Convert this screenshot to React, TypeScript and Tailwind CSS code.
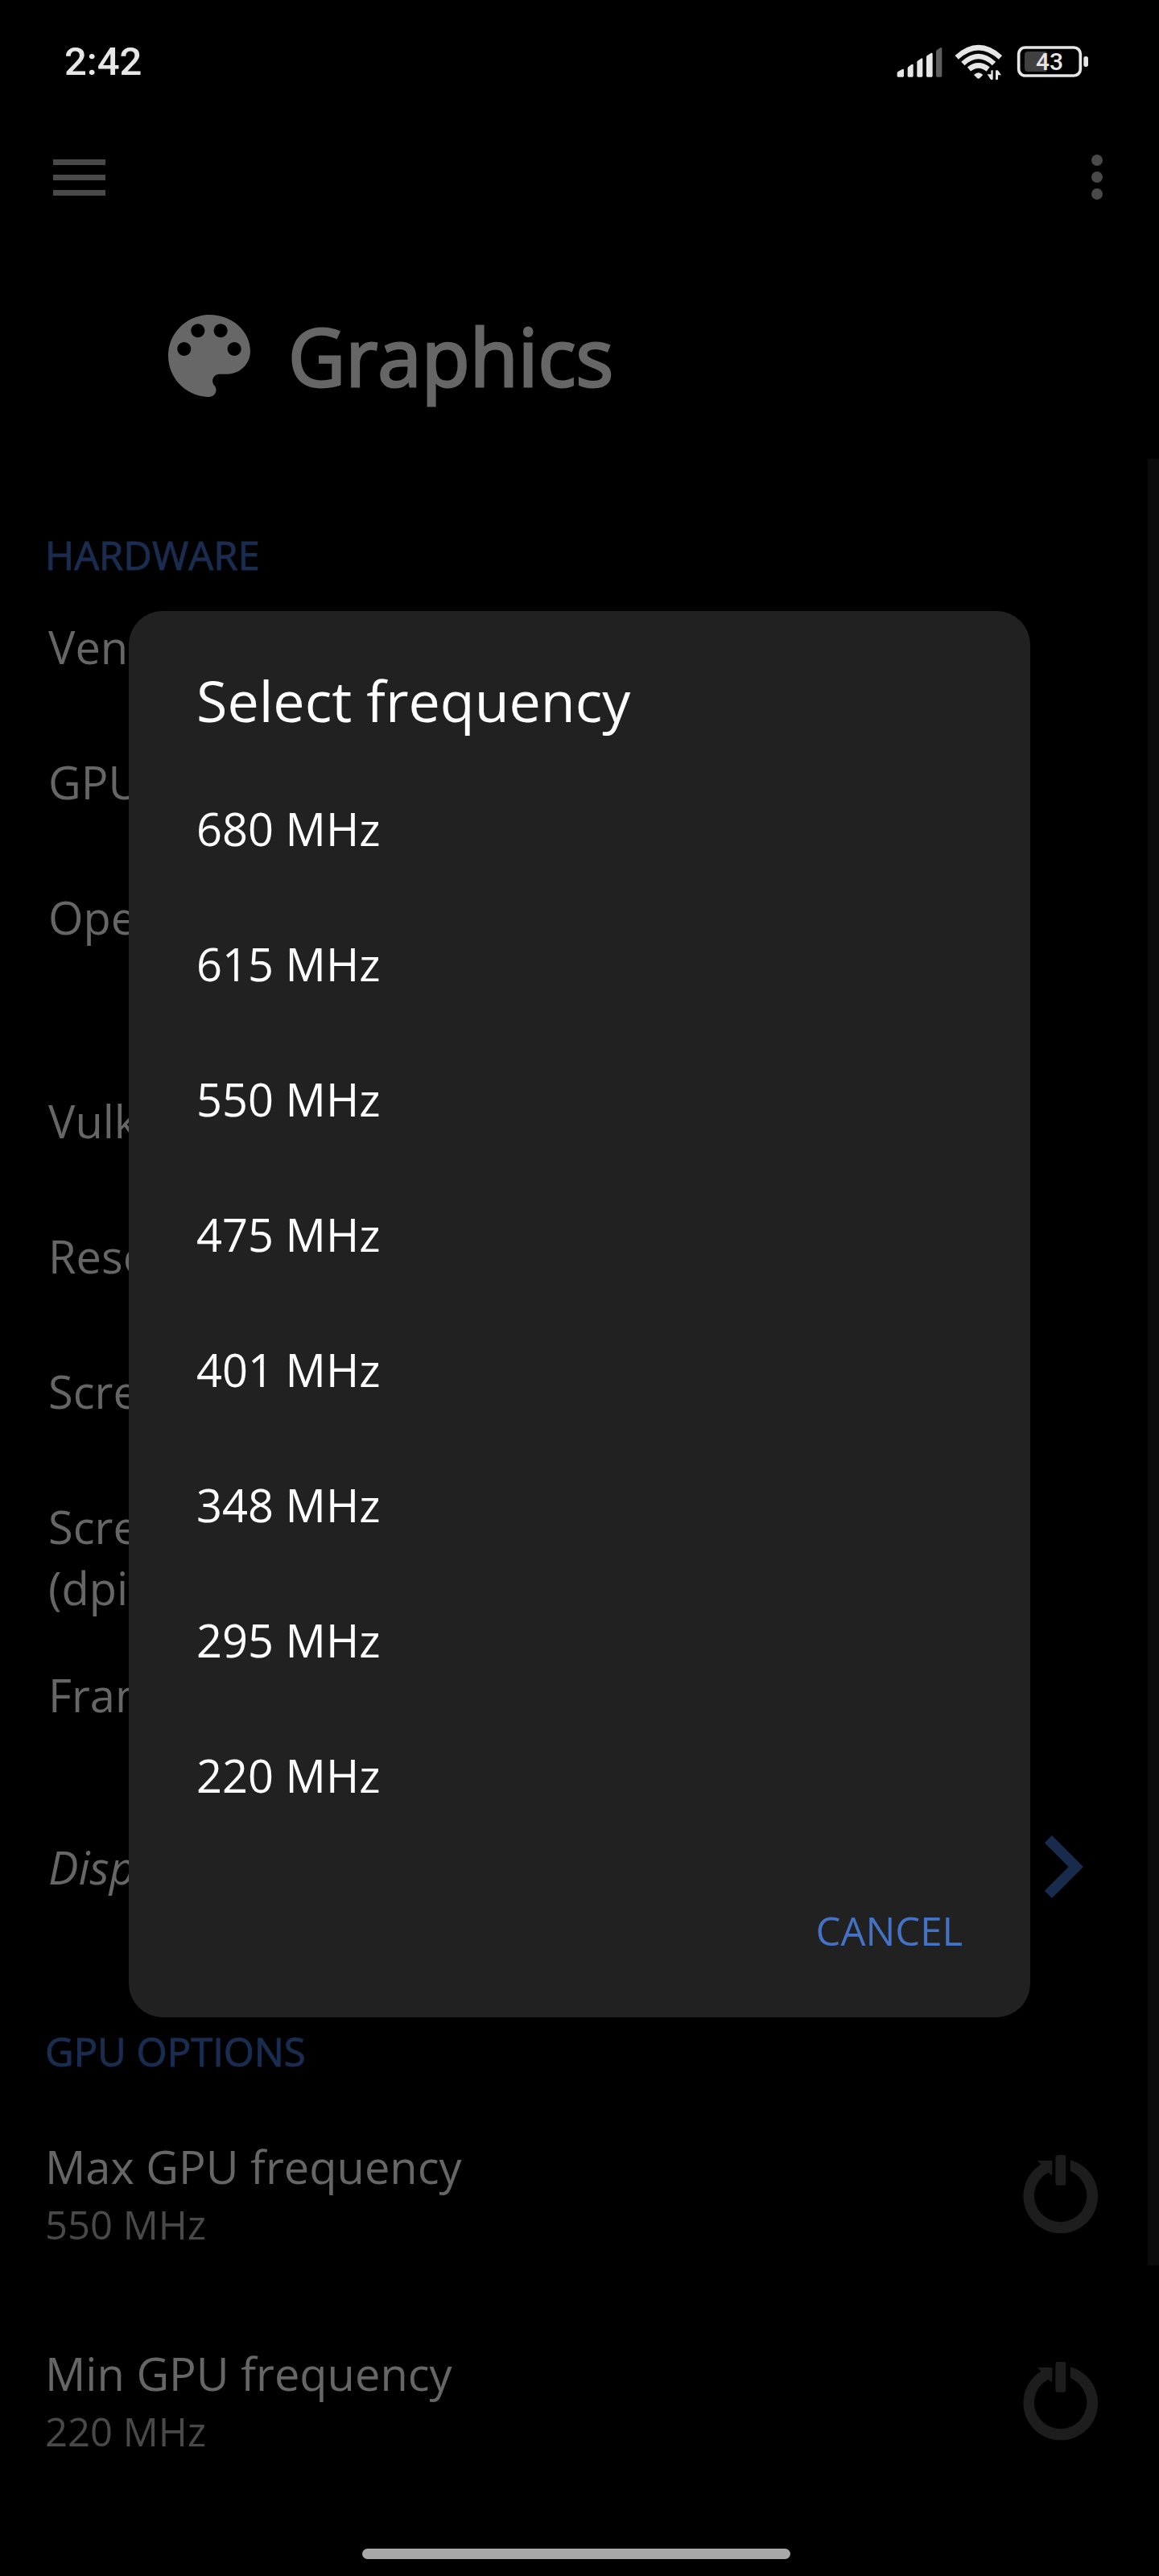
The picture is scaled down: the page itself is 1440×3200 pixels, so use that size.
type Info = { label: string; className?: string };

const hardware: Info[] = [
  { label: "Vendor", className: "min-h-[168px]" },
  { label: "GPU", className: "min-h-[168px]" },
  { label: "OpenGL", className: "min-h-[253px]" },
  { label: "Vulkan", className: "min-h-[168px]" },
  { label: "Resolution", className: "min-h-[168px]" },
  { label: "Screen size", className: "min-h-[168px]" },
  { label: "Screen density (dpi)", className: "min-h-[209px]" },
  { label: "Frame rate", className: "min-h-[168px]" },
];

const options = [
  { label: "Max GPU frequency", value: "550 MHz" },
  { label: "Min GPU frequency", value: "220 MHz" },
];

const frequencies = [680, 615, 550, 475, 401, 348, 295, 220];

function StatusIcons() {
  return (
    <div className="relative">
      <svg width="240" height="48" viewBox="99 69 720 144" fill="#e6e6e6" aria-hidden="true">
        <path d="M101 182q0-3 3-5l16-9q6-3 6 3v22q0 4-4 4h-17q-4 0-4-4z" />
        <path d="M140 164q0-4 4-6l11-8q6-3 6 3v40q0 4-4 4h-13q-4 0-4-4z" />
        <path d="M175 142q0-4 4-6l11-8q6-3 6 3v62q0 4-4 4h-13q-4 0-4-4z" />
        <path d="M210 122q0-4 4-6l13-8q6-3 6 3v82q0 4-4 4h-15q-4 0-4-4z" />
        <path d="M246 102q0-4 4-6l12-8q6-3 6 3v102q0 4-4 4h-14q-4 0-4-4z" fill="#5e5e5e" />
        <g fill="none" stroke="#e6e6e6" strokeWidth="19">
          <path d="M323 124Q404 51 486 124" />
          <path d="M346 147Q404 93 462 147" />
          <path d="M369 168Q404 140 440 168" strokeWidth="20" />
        </g>
        <path d="M387 189q17-17 34 0l-12 12q-5 5-10 0z" />
        <path d="M451 174q0-2 2-2h5v32q0 3-3 3h-3q-2 0-4-3l-11-17h14z" />
        <path d="M468 174q0-2 3-2h4q2 0 3 2l11 16h-12v15q0 2-3 2h-6z" />
        <rect x="554" y="87" width="230" height="105" rx="24" fill="none" stroke="#e6e6e6" strokeWidth="11" />
        <path d="M588 102h69v75h-69q-12 0-12-12v-51q0-12 12-12z" fill="#404040" />
        <rect x="796" y="120" width="17" height="39" rx="8" />
      </svg>
      <span className="absolute top-1 left-[150px] w-20 text-center font-['Roboto',sans-serif] text-[30px] leading-10 font-medium text-[#e6e6e6]">
        43
      </span>
    </div>
  );
}

function PaletteIcon() {
  return (
    <svg className="size-[136px] shrink-0" viewBox="0 0 24 24" fill="#676767" aria-hidden="true">
      <path d="M12 3c-4.97 0-9 4.03-9 9s4.03 9 9 9c.83 0 1.5-.67 1.5-1.5 0-.39-.15-.74-.39-1.01-.23-.26-.38-.61-.38-.99 0-.83.67-1.5 1.5-1.5H16c2.76 0 5-2.24 5-5 0-4.42-4.03-8-9-8zm-5.5 9c-.83 0-1.5-.67-1.5-1.5S5.67 9 6.5 9 8 9.67 8 10.5 7.33 12 6.5 12zm3-4C8.67 8 8 7.33 8 6.5S8.67 5 9.5 5s1.5.67 1.5 1.5S10.33 8 9.5 8zm5 0c-.83 0-1.5-.67-1.5-1.5S13.67 5 14.5 5s1.5.67 1.5 1.5S15.33 8 14.5 8zm3 4c-.83 0-1.5-.67-1.5-1.5S16.67 9 17.5 9s1.5.67 1.5 1.5-.67 1.5-1.5 1.5z" />
    </svg>
  );
}

function BootIcon() {
  return (
    <svg width="100" height="102" viewBox="143 102 300 306" fill="#1d1d1d" aria-hidden="true">
      <rect x="273" y="111" width="39" height="113" rx="9" />
      <path d="M329 130A139 139 0 1 1 219 146L206 132H261V188L246 176A98 98 0 1 0 329 172Z" />
    </svg>
  );
}

function SectionTitle({ children }: { children: string }) {
  return (
    <h2 className="px-14 text-[49px] leading-[68px] text-[#1a2d50] [-webkit-text-stroke:1px_#1a2d50]">
      {children}
    </h2>
  );
}

function FrequencyDialog() {
  return (
    <div className="absolute inset-0 flex items-center justify-center px-40 pt-[65px]">
      <div
        role="dialog"
        aria-modal="true"
        aria-labelledby="dialog-title"
        className="flex w-full flex-col rounded-[42px] bg-[#212121] pt-[63px] pb-[74px] text-white"
      >
        <h2 id="dialog-title" className="px-[84px] text-[70px] leading-[96px]">
          Select frequency
        </h2>
        <ul className="mt-[27px]">
          {frequencies.map((f) => (
            <li key={f}>
              <button type="button" className="w-full px-[84px] py-[46px] text-left text-[56px] leading-[76px]">
                {f} MHz
              </button>
            </li>
          ))}
        </ul>
        <div className="mt-[75px] flex justify-end px-[84px]">
          <button type="button" className="text-[49px] leading-[68px] text-[#4472c4]">
            CANCEL
          </button>
        </div>
      </div>
    </div>
  );
}

export default function App() {
  return (
    <div className="relative flex min-h-screen flex-col overflow-hidden bg-black font-['Open_Sans','Noto_Sans',sans-serif] text-[#666666]">
      <header>
        <div className="flex h-[153px] items-center justify-between pr-[86px] pl-20">
          <span className="font-['Roboto',sans-serif] text-[49px] leading-[68px] font-medium text-[#e6e6e6]">2:42</span>
          <StatusIcons />
        </div>
        <div className="flex h-[134px] items-center justify-between pr-14 pl-[66px]">
          <button type="button" aria-label="Open menu" className="flex w-[65px] flex-col gap-3">
            <span className="h-[7px] bg-[#494949]" />
            <span className="h-[7px] bg-[#494949]" />
            <span className="h-[7px] bg-[#494949]" />
          </button>
          <button type="button" aria-label="More options" className="flex w-[42px] flex-col items-center gap-[7px]">
            <span className="size-3.5 rounded-full bg-[#494949]" />
            <span className="size-3.5 rounded-full bg-[#494949]" />
            <span className="size-3.5 rounded-full bg-[#494949]" />
          </button>
        </div>
        <div className="mt-[87px] flex items-center gap-[30px] pl-48">
          <PaletteIcon />
          <h1 className="text-[98px] leading-[134px] [-webkit-text-stroke:3px_#666666]">Graphics</h1>
        </div>
      </header>

      <main className="mt-[145px] flex grow flex-col">
        <SectionTitle>HARDWARE</SectionTitle>
        <ul className="mt-[42px] px-[60px] text-[56px] leading-[76px]">
          {hardware.map((row) => (
            <li key={row.label} className={row.className}>
              <p className="w-1/3">{row.label}</p>
            </li>
          ))}
        </ul>
        <button type="button" className="mt-1.5 flex items-center justify-between pr-[42px] pl-[60px]">
          <span className="text-[56px] leading-[76px] italic">Display</span>
          <svg className="size-[156px]" viewBox="0 0 24 24" fill="#182b4d" aria-hidden="true">
            <path d="M10 6 8.59 7.41 13.17 12l-4.58 4.59L10 18l6-6z" />
          </svg>
        </button>

        <div className="mt-[117px]">
          <SectionTitle>GPU OPTIONS</SectionTitle>
        </div>
        <ul className="mt-[71px] flex flex-col gap-[113px] pr-[72px] pl-14">
          {options.map((o) => (
            <li key={o.label} className="flex items-center justify-between">
              <button type="button" className="text-left">
                <span className="block text-[56px] leading-[76px]">{o.label}</span>
                <span className="block text-[49px] leading-[68px] text-[#494949]">{o.value}</span>
              </button>
              <button type="button" aria-label={`Apply ${o.label} on boot`}>
                <BootIcon />
              </button>
            </li>
          ))}
        </ul>
      </main>

      <div className="absolute top-[570px] right-0 h-[2244px] w-3.5 bg-[#0b0b0b]" />
      <FrequencyDialog />

      <div className="mr-2 mb-[21px] h-[13px] w-[532px] self-center rounded-full bg-[#a8a8a8]" />
    </div>
  );
}
